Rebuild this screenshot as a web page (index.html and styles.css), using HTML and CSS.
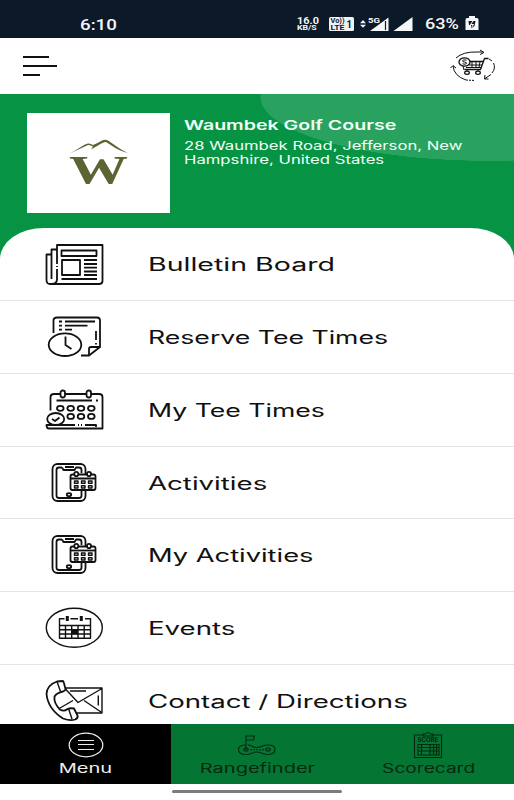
FILE: index.html
```html
<!DOCTYPE html>
<html lang="en">
<head>
    <meta charset="UTF-8">
    <meta name="viewport" content="width=device-width, initial-scale=1.0">
    <title>Waumbek Golf Course</title>
    <link rel="stylesheet" href="styles.css">
</head>
<body>
    <!-- Shared icons -->
    <svg class="symbols" width="0" height="0">
        <symbol id="activities" viewBox="0 0 60 44">
            <rect x="7.5" y="3" width="33" height="37" rx="5"/>
            <path d="M17 6.500H14Q11.500 6.500 11.500 9V34.500Q11.500 37 14 37H34Q36.500 37 36.500 34.500V29M17 6.500L18.500 9H29.500L31 6.500H34Q36.500 6.500 36.500 9V12M20 6H29"/>
            <ellipse cx="24" cy="33.700" rx="2.200" ry="1.500"/>
            <rect class="paper" x="25.500" y="13.500" width="25" height="15.500" rx="2"/>
            <path d="M26 17.500H50"/>
            <ellipse class="paper" cx="31.300" cy="13" rx="2" ry="2.200"/>
            <ellipse class="paper" cx="44" cy="13" rx="2" ry="2.200"/>
            <path class="thin" d="M29.500 20H33V22.200H29.500ZM36.500 20H40V22.200H36.500ZM43.500 20H47V22.200H43.500ZM29.500 24.800H33V27H29.500ZM36.500 24.800H40V27H36.500ZM43.500 24.800H47V27H43.500Z"/>
        </symbol>
    </svg>

    <!-- Status bar -->
    <div class="status-bar">
        <span class="clock"><span class="wide">6:10</span></span>
        <div class="net-speed"><span class="wide">16.0</span><span class="wide unit">KB/S</span></div>
        <svg class="signals" width="84" height="18" viewBox="0 0 84 18">
            <rect x="0" y="2" width="25" height="14" rx="1.500" fill="#eef2f5"/>
            <text x="1.500" y="8.300" textLength="14" lengthAdjust="spacingAndGlyphs" class="volte">Vo))</text>
            <text x="1.500" y="15.100" textLength="14" lengthAdjust="spacingAndGlyphs" class="volte">LTE</text>
            <text x="17.500" y="12.800" textLength="5.500" lengthAdjust="spacingAndGlyphs" class="sim">1</text>
            <path d="M31 8.200L34 5L37 8.200ZM31 9.800H37L34 12.800Z" fill="#eef2f5"/>
            <text x="39" y="7.700" textLength="12" lengthAdjust="spacingAndGlyphs" class="five-g">5G</text>
            <path d="M41 16L59.500 2.500V16ZM64.500 16L83.500 2V16Z" fill="#f5f7f8"/>
            <path d="M56.500 6V15" stroke="#0b1929" stroke-width="1.200"/>
        </svg>
        <span class="battery"><span class="wide">63%</span></span>
        <svg class="battery-icon" width="14" height="16" viewBox="0 0 14 16">
            <path d="M4 0H10V2H12Q13.500 2 13.500 4V14H.500V4Q.500 2 2 2H4Z" fill="#f5f7f8"/>
            <path d="M3.500 5H10.500L9.500 10L6 12.500V9H4Z" fill="#0b1929"/>
            <path d="M8 5L5.500 8.500H8.500L6.500 11.500" fill="none" stroke="#fff"/>
        </svg>
    </div>

    <!-- Top bar -->
    <header class="top-bar">
        <svg width="36" height="22" viewBox="0 0 36 22" stroke="#111" stroke-width="2">
            <path d="M1 2H27M1 11H35M1 20H18"/>
        </svg>
        <svg class="icon cart" width="46" height="34" viewBox="0 0 46 34">
            <path class="thin" d="M6 9Q13 2.500 27 3H33M30 1L34 3.500L30 5.500"/>
            <path class="thin" d="M3 17Q4 27 16 31M.500 19L3 16.500L6 19"/>
            <path class="thin" d="M39 10L42 12M43.500 14Q46 19 42 24M41 25.500L35 29.500M35 26L34.500 30L38.500 30"/>
            <path class="thin" stroke-dasharray="2 1" d="M16 31L25 31.500"/>
            <path d="M38.500 9.500H34.500L30.500 20.500H14.500M19 12.500H33.500"/>
            <path class="thin" d="M19 16H32M16 18.500H31M22 12.500V18.500M26 12.500V18.500M30 12.500L29 18.500M13 17L14 21M17 21V23M28 21V23"/>
            <ellipse class="paper" cx="14.500" cy="13" rx="5.500" ry="4.200"/>
            <path class="thin" d="M16.500 11.200Q12.500 10 12.500 12Q12.500 12.800 14.500 13Q17 13.500 16.500 14.500Q15.500 15.800 12.500 14.800"/>
            <ellipse class="paper" cx="17" cy="23.800" rx="2.300" ry="1.600"/>
            <ellipse class="paper" cx="28" cy="23.800" rx="2.300" ry="1.600"/>
        </svg>
    </header>

    <!-- Course info -->
    <section class="course">
        <div class="course-logo">
            <svg width="62" height="60" viewBox="0 -5 62 60" fill="#5d6431">
                <path d="M2 15.500Q8 12 12 9.500Q17 6 20 5.500Q22 5 25 7Q30 5 34 2.500Q37 1 40 2.500L48 8Q55 13 60 15Q51 12.500 45 8.500L38 4Q35 4 30 7.500L23 11.500L25 8.500Q22 6.500 20 7Q13 10 2 15.500Z"/>
                <text x="1" y="44.500" textLength="59" lengthAdjust="spacingAndGlyphs" class="logo-letter">W</text>
            </svg>
        </div>
        <div class="course-text">
            <h1><span class="wide">Waumbek Golf Course</span></h1>
            <p><span class="wide">28 Waumbek Road, Jefferson, New</span><span class="wide">Hampshire, United States</span></p>
        </div>
    </section>

    <!-- Menu list -->
    <main class="menu-list">
        <a class="menu-row bulletin">
            <svg class="icon" width="60" height="44" viewBox="0 0 60 44">
                <path d="M12 38V3H57.500V39Q57.500 42 54 42H5Q1.500 42 1.500 38V12.500H6.500M12 7.500H6.500V37M12 37Q12 42 7 42"/>
                <path d="M16.500 8.500H51.500V14H16.500ZM17 18H35V33H17Z"/>
                <path d="M39 18H52M39 22H52M39 25.700H52M39 29.500H52M39 33H52M16.500 37H52"/>
                <path d="M10 23H13M10 26H13" stroke="#fff"/>
            </svg>
            <span class="wide">Bulletin Board</span>
        </a>
        <a class="menu-row reserve">
            <svg class="icon" width="60" height="44" viewBox="0 0 60 44">
                <path d="M8.500 18V5Q8.500 2.500 12 2.500H52Q55 2.500 55 5.500V32L44 40.500H36M55 32H46Q44 32 44 34V40"/>
                <path d="M14 6.500H17M20 6.500H50M14 10.700H17M20 10.700H42.500M14 14.700H17M20 14.700H27M51 16V25M51 28V29.500"/>
                <ellipse class="paper" cx="20" cy="29.700" rx="16.300" ry="11.300"/>
                <path d="M20.500 21.500V30L26.500 34"/>
            </svg>
            <span class="wide">Reserve Tee Times</span>
        </a>
        <a class="menu-row tee-times">
            <svg class="icon" width="60" height="44" viewBox="0 0 60 44">
                <path d="M5.500 22.500V9Q5.500 6 9 6H54Q57.500 6 57.500 9V40.500H4Q1.500 40.500 1.500 37H30M40 37H51V39M33 37H34M36 37H37"/>
                <path d="M11.500 12.500H47M51 12.500H53"/>
                <rect class="paper" x="15.500" y="2.500" width="4.500" height="7" rx="2.200"/>
                <rect class="paper" x="41.500" y="2.500" width="4.500" height="7" rx="2.200"/>
                <ellipse cx="15.300" cy="20.300" rx="3.300" ry="2.500"/>
                <ellipse cx="25.700" cy="20.300" rx="3.300" ry="2.500"/>
                <ellipse cx="36" cy="20.300" rx="3.300" ry="2.500"/>
                <ellipse cx="46.300" cy="20.300" rx="3.300" ry="2.500"/>
                <ellipse cx="25.700" cy="28.400" rx="3.300" ry="2.500"/>
                <ellipse cx="36" cy="28.400" rx="3.300" ry="2.500"/>
                <ellipse cx="46.300" cy="28.400" rx="3.300" ry="2.500"/>
                <ellipse class="paper" cx="10.700" cy="31" rx="8.500" ry="6"/>
                <path d="M7 31L10 33L14.500 29.500"/>
            </svg>
            <span class="wide">My Tee Times</span>
        </a>
        <a class="menu-row">
            <svg class="icon" width="60" height="44"><use href="#activities"/></svg>
            <span class="wide">Activities</span>
        </a>
        <a class="menu-row my-activities">
            <svg class="icon" width="60" height="44"><use href="#activities"/></svg>
            <span class="wide">My Activities</span>
        </a>
        <a class="menu-row">
            <svg class="icon" width="60" height="44" viewBox="0 0 60 44">
                <ellipse class="thin" cx="29.300" cy="21.700" rx="28" ry="19.500"/>
                <path class="thin" d="M19.500 12.700H14.500V32.300H45.500V12.700H40M25.500 12.700H33"/>
                <path d="M22.300 10V15M36.300 10V15" stroke-width="3"/>
                <path class="thin" d="M14.500 19.500H45.500M14.500 23.800H45.500M14.500 28H45.500M20.500 19.500V32M26.700 19.500V32M33 19.500V32M39.200 19.500V32"/>
                <path d="M26.500 23.500H33V28.300H26.500Z" fill="#111" stroke="none"/>
            </svg>
            <span class="wide">Events</span>
        </a>
        <a class="menu-row">
            <svg class="icon" width="60" height="44" viewBox="0 0 60 44">
                <path class="thin" d="M20 9H57V34H32M20 9.500L33 23.500L57 9.500M28 21.500L15 29M39 21.500L56 33"/>
                <path class="thin" d="M25 12H41M53.300 16.500V26.500"/>
                <path class="paper" d="M12 2.500L17.500 2Q18.500 2 18.800 3.500L20.500 10Q20.500 11.500 18 12.500Q11.500 14 9.500 17.500Q8.500 24 15 30.500Q19 33 22.500 30Q25 28.800 29 29.500L32.500 36.500Q33.500 39 30 40.500Q25 42 18 39.500Q3 30 1.500 15Q2 6 12 2.500Z"/>
                <path class="thin" d="M12 2.500L15.500 12.500M23.500 29.500L27 40"/>
            </svg>
            <span class="wide">Contact / Directions</span>
        </a>
    </main>

    <!-- Bottom navigation -->
    <nav class="bottom-nav">
        <a class="nav-item active">
            <svg width="40" height="28" viewBox="0 0 40 28" fill="none" stroke="#eee" stroke-width="1.200">
                <ellipse cx="20" cy="14" rx="16.800" ry="11.800"/>
                <path d="M12 9.500H28M12 13.500H28M12 18.500H28"/>
            </svg>
            <span class="wide">Menu</span>
        </a>
        <a class="nav-item">
            <svg class="nav-icon" width="40" height="28" viewBox="0 0 40 28">
                <path d="M9 13.500V5H17.500L16.500 9H9.500M8 14Q1.500 14.500 1.500 18.500Q1.500 23.500 9 23.500C15 23.500 15 21 20 21S25 23.500 31 23.500Q38 23 38 18.500Q38 14 31 14C25 14 25 16.500 20 16.500S15 14 11 14"/>
                <path d="M13 18.700H27" stroke-dasharray="2 1"/>
                <ellipse cx="9" cy="18.500" rx="2.200" ry="1.500"/>
                <ellipse cx="31" cy="18.500" rx="2.200" ry="1.500"/>
                <path d="M9 13V19"/>
            </svg>
            <span class="wide">Rangefinder</span>
        </a>
        <a class="nav-item scorecard">
            <svg class="nav-icon" width="40" height="28" viewBox="0 0 40 28">
                <path d="M15 4H6.500V26.500H33.500V4H25M15 3H17.500Q20 0 22.500 3H25V5H15Z"/>
                <path d="M10 13.500H31V24H10ZM10 16.500H31M10 20H31M13.500 13.500V24M22 13.500V24M25.500 13.500V24M28.500 13.500V24"/>
                <text x="9.500" y="11" textLength="21" lengthAdjust="spacingAndGlyphs">SCORE</text>
            </svg>
            <span class="wide">Scorecard</span>
        </a>
    </nav>
    <div class="gesture-bar"></div>
</body>
</html>
```
FILE: styles.css
```css
/* General Reset */
* {
    box-sizing: border-box;
}

body {
    margin: 0;
    height: 800px;
    display: flex;
    flex-direction: column;
    overflow: hidden;
    font-family: Inter, "Open Sans", sans-serif;
    background: #fff;
    color: #111;
}

.symbols {
    position: absolute;
}

/* Extended lettering */
.wide {
    display: inline-block;
    white-space: nowrap;
    transform: scaleX(1.45);
    transform-origin: left center;
}

/* Status Bar */
.status-bar {
    height: 38px;
    flex: none;
    display: flex;
    align-items: center;
    padding: 10px 0 0 80px;
    background: #0b1929;
    color: #f5f7f8;
    font-family: Roboto, sans-serif;
    font-weight: bold;
}

.clock {
    width: 217px;
    padding-top: 1px;
    font-size: 15px;
    font-weight: 500;
}

.clock .wide,
.battery .wide {
    transform: scaleX(1.25);
}

.net-speed {
    width: 32px;
    display: flex;
    flex-direction: column;
    align-items: flex-start;
    font-size: 8.5px;
    line-height: 8px;
}

.net-speed .wide {
    transform: scaleX(1.28);
}

.net-speed .unit {
    font-size: 7px;
    line-height: 7px;
    transform: scaleX(1.24);
}

.volte,
.sim {
    font: bold 7px Roboto, sans-serif;
    fill: #0b1929;
}

.volte {
    font-size: 6.5px;
}

.sim {
    font-size: 10px;
}

.five-g {
    font: bold 8px Roboto, sans-serif;
    fill: #f5f7f8;
}

.battery {
    width: 40px;
    margin-left: 12px;
    padding-top: 1px;
    font-size: 14.5px;
    font-weight: 500;
}

/* Top Bar */
.top-bar {
    height: 56px;
    flex: none;
    display: flex;
    align-items: center;
    justify-content: space-between;
    padding: 0 18px 0 22px;
}

/* Icons */
.icon {
    flex: none;
    fill: none;
    stroke: #111;
    stroke-width: 1.8;
    stroke-linejoin: round;
}

.thin {
    stroke-width: 1.4;
}

.paper {
    fill: #fff;
}

.cart {
    stroke-width: 1.3;
}

.cart .thin {
    stroke-width: 1;
}

/* Course Info */
.course {
    height: 170px;
    flex: none;
    display: flex;
    gap: 14px;
    padding: 19px 0 0 27px;
    background: radial-gradient(230px 64px at 490px 3px, #29a25f 99.5%, #079344 100%);
    color: #f2fff6;
}

.course-logo {
    width: 143px;
    height: 100px;
    display: flex;
    align-items: center;
    justify-content: center;
    background: #fff;
}

.logo-letter {
    font: bold 40px "Liberation Serif", serif;
}

.course-text h1 {
    margin: 4px 0 5px;
    font-size: 13.5px;
    line-height: 17px;
    font-weight: 600;
}

.course-text p {
    display: flex;
    flex-direction: column;
    align-items: flex-start;
    margin: 0;
    font-size: 12px;
    line-height: 13.5px;
}

.course-text p .wide {
    transform: scaleX(1.39);
}

/* Menu List */
.menu-list {
    flex: 1;
    min-height: 0;
    margin-top: -36px;
    padding-top: 0.6px;
    overflow: hidden;
    background: #fff;
    border-radius: 44px 44px 0 0 / 31px 31px 0 0;
}

.menu-row {
    height: 72.7px;
    display: flex;
    align-items: center;
    gap: 43px;
    padding-left: 45px;
    border-bottom: 1px solid #e4e4e4;
    font-size: 18px;
}

.menu-row .wide {
    padding-top: 1px;
    transform: scaleX(1.535);
}

.menu-row.bulletin .wide {
    transform: scaleX(1.585);
}

.menu-row.reserve .wide,
.menu-row.tee-times .wide {
    transform: scaleX(1.48);
}

.menu-row.my-activities .wide {
    transform: scaleX(1.515);
}

/* Bottom Navigation */
.bottom-nav {
    height: 60px;
    flex: none;
    display: grid;
    grid-template-columns: repeat(3, 1fr);
    background: #057534;
}

.nav-item {
    display: flex;
    flex-direction: column;
    align-items: center;
    padding-top: 7px;
    font-size: 13px;
    line-height: 18px;
    color: #06280f;
}

.nav-item .wide {
    transform: scaleX(1.54);
    transform-origin: center;
}

.nav-item.scorecard .wide {
    transform: scaleX(1.47);
}

.nav-item.active {
    background: #000;
    color: #eee;
}

.nav-icon {
    fill: none;
    stroke: #06280f;
    stroke-width: 1.1;
}

.nav-icon text {
    font: bold 5.5px Inter, sans-serif;
    fill: #06280f;
    stroke: none;
}

.gesture-bar {
    width: 170px;
    height: 3px;
    flex: none;
    margin: 6px auto 7px;
    border-radius: 2px;
    background: #7c7c7c;
}
```
